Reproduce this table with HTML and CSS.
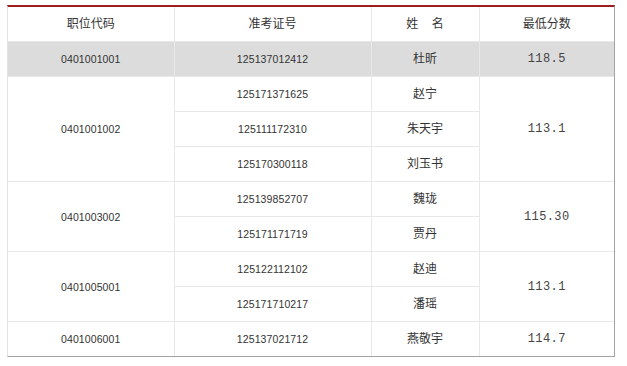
FILE: index.html
```html
<!DOCTYPE html>
<html lang="zh-CN">
<head>
  <meta charset="UTF-8">
  <title>最低分数</title>
  <link rel="stylesheet" href="styles.css">
</head>
<body>
  <div class="frame">
    <table class="scores">
      <colgroup>
        <col class="c-code">
        <col class="c-ticket">
        <col class="c-name">
        <col class="c-score">
      </colgroup>
      <thead>
        <tr>
          <th>职位代码</th>
          <th>准考证号</th>
          <th>姓&nbsp;&nbsp;&nbsp;&nbsp;名</th>
          <th>最低分数</th>
        </tr>
      </thead>
      <tbody>
        <tr class="hl">
          <td class="num">0401001001</td>
          <td class="num">125137012412</td>
          <td>杜昕</td>
          <td class="score">118.5</td>
        </tr>
        <tr>
          <td class="num" rowspan="3">0401001002</td>
          <td class="num">125171371625</td>
          <td>赵宁</td>
          <td class="score" rowspan="3">113.1</td>
        </tr>
        <tr>
          <td class="num">125111172310</td>
          <td>朱天宇</td>
        </tr>
        <tr>
          <td class="num">125170300118</td>
          <td>刘玉书</td>
        </tr>
        <tr>
          <td class="num" rowspan="2">0401003002</td>
          <td class="num">125139852707</td>
          <td>魏珑</td>
          <td class="score" rowspan="2">115.30</td>
        </tr>
        <tr>
          <td class="num">125171171719</td>
          <td>贾丹</td>
        </tr>
        <tr>
          <td class="num" rowspan="2">0401005001</td>
          <td class="num">125122112102</td>
          <td>赵迪</td>
          <td class="score" rowspan="2">113.1</td>
        </tr>
        <tr>
          <td class="num">125171710217</td>
          <td>潘瑶</td>
        </tr>
        <tr>
          <td class="num">0401006001</td>
          <td class="num">125137021712</td>
          <td>燕敬宇</td>
          <td class="score">114.7</td>
        </tr>
      </tbody>
    </table>
  </div>
</body>
</html>
```

FILE: styles.css
```css
body {
  margin: 5px 0 0 7px;
  background: #fff;
  color: #333;
  font-family: "Liberation Sans", "Noto Sans CJK SC", sans-serif;
  font-size: 12px;
}

.frame {
  width: 606px;
  border-top: 2px solid #a01d1d;
  border-left: 1px solid #e6e3de;
  border-right: 1px solid #a3a3a3;
  border-bottom: 1px solid #a3a3a3;
}

.scores {
  width: 606px;
  table-layout: fixed;
  border-collapse: collapse;
  border-style: hidden;
}

.c-code { width: 166px; }
.c-ticket { width: 197px; }
.c-name { width: 108px; }
.c-score { width: 135px; }

.scores th,
.scores td {
  height: 34px;
  padding: 0;
  border: 1px solid #e8e8e8;
  text-align: center;
  vertical-align: middle;
  font-weight: normal;
  line-height: 14px;
}

.scores .hl td {
  background: #dcdcdc;
}

.num {
  font-size: 10.5px;
  letter-spacing: 0.1px;
}

.score {
  font-family: "Liberation Mono", monospace;
  font-size: 12px;
  color: #444;
  letter-spacing: 0.4px;
}
```
